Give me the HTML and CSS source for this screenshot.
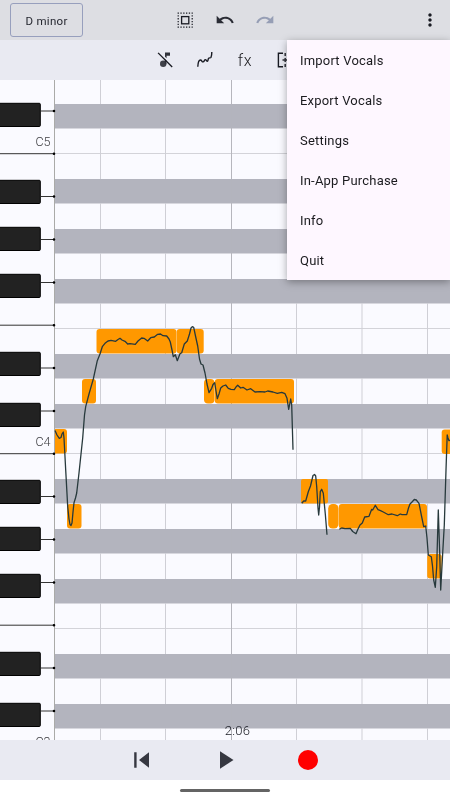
FILE: index.html
```html
<!DOCTYPE html>
<html lang="en">
<head>
  <meta charset="UTF-8" />
  <meta name="viewport" content="width=device-width, initial-scale=1.0"/>
  <title>Vocal Editor</title>
  <link rel="stylesheet" href="styles.css">
</head>
<body>

  <!-- Top bar -->
  <header class="topbar">
    <button class="key-button">D minor</button>
    <div class="topbar-icons">
      <svg width="20" height="20" viewBox="0 0 20 20">
        <path d="M2.6 3.1h15M2.6 17.1h15M3.2 2.5v15M17.2 2.5v15" fill="none" stroke="#191b23" stroke-width="1.2" stroke-dasharray="1.3 1.5"/>
        <rect x="6.6" y="6.6" width="7.2" height="7.2" fill="none" stroke="#191b23" stroke-width="1.3"/>
      </svg>
      <svg class="undo" width="20" height="20" viewBox="0 0 24 24">
        <path d="M12.5 8c-2.65 0-5.05.99-6.9 2.6L2 7v9h9l-3.62-3.62c1.39-1.16 3.16-1.88 5.12-1.88 3.54 0 6.55 2.31 7.6 5.5l2.37-.78C21.08 11.03 17.15 8 12.5 8z"/>
      </svg>
      <svg class="disabled" width="20" height="20" viewBox="0 0 24 24">
        <path d="M18.4 10.6C16.55 8.99 14.15 8 11.5 8c-4.65 0-8.58 3.03-9.96 7.22L3.9 16c1.05-3.19 4.05-5.5 7.6-5.5 1.95 0 3.73.72 5.12 1.88L13 16h9V7l-3.6 3.6z"/>
      </svg>
    </div>
    <svg class="more" width="20" height="20" viewBox="0 0 24 24">
      <path d="M12 8c1.1 0 2-.9 2-2s-.9-2-2-2-2 .9-2 2 .9 2 2 2zm0 2c-1.1 0-2 .9-2 2s.9 2 2 2 2-.9 2-2-.9-2-2-2zm0 6c-1.1 0-2 .9-2 2s.9 2 2 2 2-.9 2-2-.9-2-2-2z"/>
    </svg>
  </header>

  <!-- Tools -->
  <nav class="tools">
    <svg width="20" height="20" viewBox="0 0 20 20">
      <circle cx="8.2" cy="13.8" r="3.2" fill="#3f4149"/>
      <path d="M9.8 9l1.6 1.6v3.6H9.8zM10 2.5h5v3.2h-3.4v2.6L10 6.7z" fill="#30323a"/>
      <path d="M3.1 2.9L17.2 17" fill="none" stroke="#15171f" stroke-width="1.3"/>
    </svg>
    <svg width="20" height="20" viewBox="0 0 20 20">
      <path class="line" d="M2.8 16.8C3 12.6 4 10 5.4 10c1.6 0 1.3 2 2.6 1.9 1.4-.1 1.3-2.3 2.3-2.3 1.2 0 1.2 1.8 2.1 1.7 1-.1.5-2.5 1.2-3.1.7-.6 1.9-.1 2.4-.9.5-1 .8-2.8.8-5.2"/>
    </svg>
    <span class="fx">fx</span>
    <svg width="20" height="20" viewBox="0 0 20 20">
      <path class="line" d="M8 3.2H3.4v13.6H8M12 3.2h4.6v13.6H12" stroke-width="1.6"/>
      <path d="M10.2 3v3M10.2 14v3M10.2 8v4M7.5 10h5" fill="none" stroke="#30323a" stroke-width="1.5"/>
    </svg>
  </nav>

  <!-- Piano roll -->
  <main class="editor">
    <svg class="roll" width="450" height="660" viewBox="0 80 450 660">
      <!-- Rows of the black keys -->
      <g class="bands">
        <rect x="55" y="104" width="395" height="24.5"/>
        <rect x="55" y="179" width="395" height="24.5"/>
        <rect x="55" y="229" width="395" height="24.5"/>
        <rect x="55" y="279" width="395" height="24.5"/>
        <rect x="55" y="354" width="395" height="24.5"/>
        <rect x="55" y="404" width="395" height="24.5"/>
        <rect x="55" y="479" width="395" height="24.5"/>
        <rect x="55" y="529" width="395" height="24.5"/>
        <rect x="55" y="579" width="395" height="24.5"/>
        <rect x="55" y="654" width="395" height="24.5"/>
        <rect x="55" y="704" width="395" height="24.5"/>
      </g>

      <!-- Grid, hidden behind the rows -->
      <path class="grid" d="M55 153.5h395M55 328.5h395M55 453.5h395M55 628.5h395"/>
      <g class="columns">
        <path d="M100.5 80v660M165.5 80v660M296.5 80v660M362 80v660M427.5 80v660"/>
        <path class="bar-line" d="M231.5 80v660"/>
      </g>

      <!-- Keyboard -->
      <path class="edge" d="M54.5 80v660"/>
      <path class="ticks" d="M41 111h13M0 153.7h54M41 196.5h13M41 239.5h13M41 282.5h13M0 325.2h54M41 368h13M41 411h13M0 453.7h54M41 496.5h13M41 539.5h13M41 582.5h13M0 625.2h54M41 668h13M41 711h13"/>
      <path class="dots" d="M54 111h0M54 153.7h0M54 196.5h0M54 239.5h0M54 282.5h0M54 325.2h0M54 368h0M54 411h0M54 453.7h0M54 496.5h0M54 539.5h0M54 582.5h0M54 625.2h0M54 668h0M54 711h0"/>
      <g class="keys">
        <rect x="-4" y="103.3" width="44.3" height="23.2" rx="1"/>
        <rect x="-4" y="180.3" width="44.3" height="23.2" rx="1"/>
        <rect x="-4" y="227.3" width="44.3" height="23.2" rx="1"/>
        <rect x="-4" y="274.3" width="44.3" height="23.2" rx="1"/>
        <rect x="-4" y="352.3" width="44.3" height="23.2" rx="1"/>
        <rect x="-4" y="403.3" width="44.3" height="23.2" rx="1"/>
        <rect x="-4" y="480.3" width="44.3" height="23.2" rx="1"/>
        <rect x="-4" y="527.3" width="44.3" height="23.2" rx="1"/>
        <rect x="-4" y="574.3" width="44.3" height="23.2" rx="1"/>
        <rect x="-4" y="652.3" width="44.3" height="23.2" rx="1"/>
        <rect x="-4" y="703.3" width="44.3" height="23.2" rx="1"/>
      </g>
      <g class="octaves">
        <text x="35.5" y="146">C5</text>
        <text x="35.5" y="446">C4</text>
        <text x="35.5" y="746">C3</text>
      </g>

      <!-- Notes -->
      <g class="notes">
        <path d="M55 429h9a3 3 0 0 1 3 3v18.5a3 3 0 0 1-3 3h-9z"/>
        <rect x="67" y="504" width="14.5" height="24.5" rx="3"/>
        <rect x="82" y="379" width="14" height="24.5" rx="3"/>
        <rect x="96.5" y="329" width="80" height="24.5" rx="3"/>
        <rect x="176.7" y="329" width="27" height="24.5" rx="3"/>
        <rect x="204" y="379" width="10.5" height="24.5" rx="4"/>
        <rect x="214.8" y="379" width="79.2" height="24.5" rx="3"/>
        <rect x="301" y="479" width="27" height="24.5" rx="2"/>
        <rect x="328.2" y="504" width="10.3" height="24.5" rx="4.5"/>
        <rect x="338.8" y="504" width="88.2" height="24.5" rx="3"/>
        <rect x="427.2" y="554" width="14.5" height="24.5" rx="3"/>
        <rect x="441.7" y="429.5" width="20" height="24.5" rx="3"/>
      </g>

      <!-- Pitch curve -->
      <g class="pitch">
        <path d="M55 430.5L57 435L59.3 438.3L61 437.5L62 434L63.3 432L64 438L65.7 470L67.7 506.7L69 519L70 524.5L71 525.5L72 523L73 512L74 502.7L75.5 498L76.7 493L79 473L82.7 438L84.5 415L85.7 406.7L89 394L93.3 379L97.3 360.7L100 354L102.3 346.7L105 343.3L108 341L111 340.3L115.7 341.3L118 339.5L120 338.3L122 340L125 341.3L127.7 344L130 343.7L135.3 344.3L138 341L141.7 338L144 338.3L147.7 341L150.7 337.7L154.3 337L157.7 334.3L160.5 334L163 335.7L166.7 336L169 339L170.3 342L172 350L173.3 356.7L175.3 354.7L177.3 360.7L180 353.7L181.7 352.7L184.3 344L187.3 341L189.5 334L191 328L192.3 326.7L193.7 327.3L195.5 336L197.7 346L199.5 359L201 364L203 365L205 373L207 384L209 392.7L211.7 388.3L213 384.5L214.7 382.7L216 391L217.3 398.7L219 394L220.7 388L223 386L225.7 385L228.3 388.3L231 389.3L234.3 389.7L236 387L237.7 385.3L240.7 388L243 387.3L247 390L250.7 388.7L255 392L260 391.7L265 392L267.7 391L273 392L277.3 393.3L281.7 392.3L285 393.7L287 398.3L288.7 409.3L290.7 399L291.7 405L293 449.7"/>
        <path d="M301.7 503.3L303.7 501L305.7 501L308.3 491.7L310.5 486L313 475.5L314.5 474.5L315.7 476L316.7 486.7L318 508L318.7 515L319.5 507L320.3 491.7L321.7 489.3L323.3 493.3L325.3 514L327 534.7"/>
        <path d="M339.3 529.3L341.7 528L345 528.7L350.3 528.3L352.7 531.5L354.5 532.7L356 533.7L358 529L360 525L362.3 523L364.7 517L369 516.3L371.7 509.3L372.7 510L375.3 505.3L378 509.7L380.5 510.7L383.3 512L388.3 514.7L392 514L397.3 515.7L400.3 514L402 514.7L406.7 514.7L408.5 508L410 504L412 502L414.3 499.5L416.3 500L419 503.3L421.5 516L423.7 526.7L425.7 526L427 538L428.3 555L431.3 556.7L432.5 566L433.7 580L435.3 587.3L436.7 566.7L438.3 510L439.7 553L440.7 590L442.7 553L444.3 525L446 470L447.2 435L448 438L449 440.7L451 440"/>
      </g>

      <text class="time" x="237.5" y="735">2:06</text>
    </svg>
  </main>

  <!-- Player controls -->
  <footer class="player">
    <svg width="20" height="20" viewBox="0 0 20 20">
      <path d="M2.2 2.3h2.4v15.4H2.2zM17 2.3v15.4L7 10z"/>
    </svg>
    <svg width="20" height="20" viewBox="0 0 20 20">
      <path d="M5 1.3L18.5 10 5 18.7z"/>
    </svg>
    <span class="record"></span>
  </footer>
  <div class="home-bar"><span></span></div>

  <!-- Overflow menu -->
  <ul class="menu">
    <li>Import Vocals</li>
    <li>Export Vocals</li>
    <li>Settings</li>
    <li>In-App Purchase</li>
    <li>Info</li>
    <li>Quit</li>
  </ul>

</body>
</html>
```
FILE: styles.css
```css
/* General styles */
* {
  box-sizing: border-box;
}

body {
  font-family: Roboto, sans-serif;
  margin: 0;
  width: 450px;
  height: 800px;
  position: relative;
  overflow: hidden;
  display: flex;
  flex-direction: column;
  background: #fff;
  color: #1b1b1f;
}

svg {
  display: block;
  fill: #191b23;
}

/* Top bar */
.topbar {
  height: 40px;
  padding: 0 10px;
  display: flex;
  align-items: center;
  background: #dddee3;
}

.key-button {
  width: 73px;
  height: 34px;
  padding: 1px 0 0;
  border: 1px solid #979fbd;
  border-radius: 3px;
  background: none;
  color: #252730;
  font: 400 11.5px Roboto, sans-serif;
  letter-spacing: 0.3px;
}

.topbar-icons {
  display: flex;
  gap: 20px;
  margin-left: 92px;
}

.undo {
  fill: #2a2c35;
}

.disabled {
  fill: #969eb5;
}

.more {
  margin-left: auto;
}

/* Tools */
.tools {
  height: 40px;
  padding-left: 155px;
  display: flex;
  align-items: center;
  gap: 20px;
  background: #e9eaf2;
}

.line {
  fill: none;
  stroke: #191b23;
  stroke-width: 1.4;
}

.fx {
  width: 20px;
  text-align: center;
  font-size: 16px;
  font-weight: 300;
  letter-spacing: 0.6px;
}

/* Piano roll */
.editor {
  height: 660px;
  background: #fafaff;
}

.bands {
  fill: #b3b4be;
}

.grid {
  fill: none;
  stroke: #d3d3d9;
}

.columns {
  fill: none;
  stroke: #cfcfd6;
  mix-blend-mode: darken;
}

.bar-line {
  stroke: #b6b6bd;
}

.edge {
  stroke: #aaaaa8;
}

.ticks {
  fill: none;
  stroke: #333;
}

.dots {
  stroke: #000;
  stroke-width: 2.6;
  stroke-linecap: round;
}

.keys {
  fill: #222;
  stroke: #000;
}

.octaves {
  font-size: 12.5px;
  font-weight: 300;
  fill: #3c3c40;
}

.notes {
  fill: #ff9800;
}

.pitch {
  fill: none;
  stroke: #27393c;
  stroke-width: 1.3;
  stroke-linejoin: round;
}

.time {
  font-size: 13px;
  font-weight: 300;
  letter-spacing: 0.3px;
  text-anchor: middle;
}

/* Player controls */
.player {
  height: 40px;
  padding: 0 132px;
  display: flex;
  align-items: center;
  justify-content: space-between;
  background: #e9eaf2;
}

.player svg {
  fill: #363841;
}

.record {
  width: 20px;
  height: 20px;
  border-radius: 50%;
  background: #f00;
}

.home-bar {
  height: 20px;
  display: flex;
  align-items: center;
  justify-content: center;
}

.home-bar span {
  width: 90px;
  height: 3px;
  border-radius: 2px;
  background: #646464;
}

/* Overflow menu */
.menu {
  position: absolute;
  top: 40px;
  right: 0;
  width: 163px;
  margin: 0;
  padding: 0;
  list-style: none;
  background: #fef7ff;
  box-shadow: 0 2px 8px rgba(0,0,0,0.35);
}

.menu li {
  height: 40px;
  padding-left: 13px;
  line-height: 41px;
  font-size: 13px;
  letter-spacing: 0.2px;
}
```
